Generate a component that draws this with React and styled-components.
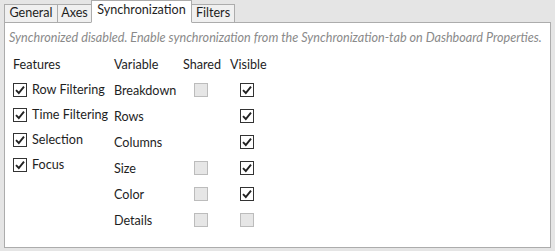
import React from 'react';
import styled, { createGlobalStyle } from 'styled-components';

const Global = createGlobalStyle`
  html, body { margin: 0; padding: 0; }
  body {
    background: #e5e5e5;
    font-family: Lato, "Noto Sans", sans-serif;
    font-size: 12.6px;
    color: #1e1e1e;
  }
`;

const Window = styled.div`
  width: 555px;
  height: 251px;
  background: #e5e5e5;
  box-sizing: border-box;
  padding: 0 4px 3px 4px;
  display: flex;
  flex-direction: column;
`;

const TabStrip = styled.div`
  display: flex;
  align-items: flex-end;
  height: 22px;
  position: relative;
  z-index: 1;
`;

const Tab = styled.div`
  box-sizing: border-box;
  width: ${p => p.w}px;
  height: ${p => (p.active ? '23px' : '19px')};
  margin-bottom: -1px;
  border: 1px solid #acacac;
  border-bottom: ${p => (p.active ? '1px solid #fff' : '1px solid #acacac')};
  border-left-width: ${p => (p.first || p.active ? '1px' : '0')};
  border-right-width: ${p => (p.beforeActive ? '0' : '1px')};
  background: ${p => (p.active ? '#fff' : '#f0f0f0')};
  display: flex;
  align-items: center;
  justify-content: center;
  white-space: nowrap;
  line-height: 1;
  padding-bottom: ${p => (p.active ? '3px' : '0')};
`;

const Panel = styled.div`
  flex: 1;
  background: #fff;
  border: 1px solid #acacac;
  padding: 6px 0 0 4px;
`;

const Notice = styled.div`
  font-style: italic;
  color: #8a8a8a;
  height: 18px;
  line-height: 18px;
  white-space: nowrap;
`;

const Body = styled.div`
  display: flex;
  margin-top: 10px;
  padding-left: 4px;
`;

const FeatureCol = styled.div`
  width: 101px;
  display: flex;
  flex-direction: column;
`;

const Header = styled.div`
  height: 20px;
  line-height: 16px;
  white-space: nowrap;
`;

const FeatureRow = styled.label`
  display: flex;
  align-items: center;
  gap: 5px;
  height: 25px;
  white-space: nowrap;
`;

const VarGrid = styled.div`
  display: grid;
  grid-template-columns: 69px 47px 40px;
  grid-template-rows: 20px repeat(6, 26px);
  align-items: center;
`;

const HeadCell = styled.div`
  align-self: start;
  line-height: 16px;
  white-space: nowrap;
`;

const Cell = styled.div`
  display: flex;
  padding-left: ${p => p.indent || 0}px;
  white-space: nowrap;
`;

const BoxWrap = styled.span`
  box-sizing: border-box;
  width: 14px;
  height: 14px;
  flex: none;
  display: inline-flex;
  align-items: center;
  justify-content: center;
  border: 1px solid ${p => (p.disabled ? '#bcbcbc' : '#333')};
  background: ${p => (p.disabled ? '#e6e6e6' : '#fff')};
`;

const Check = ({ checked, disabled }) => (
  <BoxWrap disabled={disabled}>
    {checked && (
      <svg width="10" height="10" viewBox="0 0 10 10">
        <path d="M1 5.2 L3.8 8 L9 1.6" fill="none" stroke="#222" strokeWidth="1.9" />
      </svg>
    )}
  </BoxWrap>
);

const features = ['Row Filtering', 'Time Filtering', 'Selection', 'Focus'];

const variables = [
  { name: 'Breakdown', shared: true, visible: true },
  { name: 'Rows', shared: false, visible: true },
  { name: 'Columns', shared: false, visible: true },
  { name: 'Size', shared: true, visible: true },
  { name: 'Color', shared: true, visible: true },
  { name: 'Details', shared: true, visible: false, visDisabled: true },
];

export default function App() {
  return (
    <>
      <Global />
      <Window>
        <TabStrip>
          <Tab first w={54}>General</Tab>
          <Tab beforeActive w={33}>Axes</Tab>
          <Tab active w={101}>Synchronization</Tab>
          <Tab w={43}>Filters</Tab>
        </TabStrip>
        <Panel>
          <Notice>Synchronized disabled. Enable synchronization from the Synchronization-tab on Dashboard Properties.</Notice>
          <Body>
            <FeatureCol>
              <Header>Features</Header>
              {features.map(f => (
                <FeatureRow key={f}>
                  <Check checked />
                  {f}
                </FeatureRow>
              ))}
            </FeatureCol>
            <VarGrid>
              <HeadCell>Variable</HeadCell>
              <HeadCell>Shared</HeadCell>
              <HeadCell>Visible</HeadCell>
              {variables.map(v => (
                <React.Fragment key={v.name}>
                  <Cell>{v.name}</Cell>
                  <Cell indent={11}>{v.shared && <Check disabled />}</Cell>
                  <Cell indent={10}>
                    <Check checked={v.visible} disabled={v.visDisabled} />
                  </Cell>
                </React.Fragment>
              ))}
            </VarGrid>
          </Body>
        </Panel>
      </Window>
    </>
  );
}
